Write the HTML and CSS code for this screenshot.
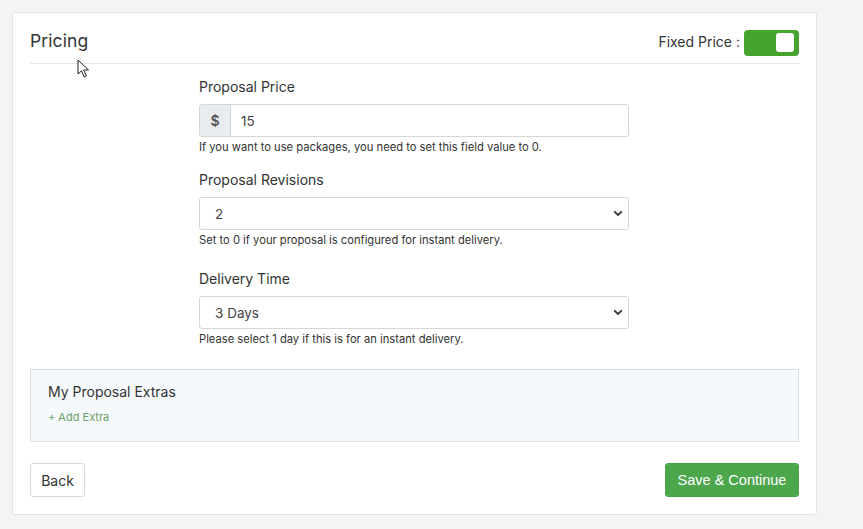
FILE: index.html
```html
<!DOCTYPE html>
<html>
<head>
<meta charset="utf-8">
<link rel="stylesheet" href="styles.css">
</head>
<body>
<div class="page">
  <div class="card">
    <div class="card-head">
      <h2 class="title">Pricing</h2>
      <div class="fixed">
        <span class="fixed-label">Fixed Price :</span>
        <span class="toggle"><span class="knob"></span></span>
      </div>
    </div>
    <div class="form">
      <div class="group g1">
        <label class="label">Proposal Price</label>
        <div class="input-group">
          <span class="addon">$</span>
          <input class="input" type="text" value="15">
        </div>
        <div class="help">If you want to use packages, you need to set this field value to 0.</div>
      </div>
      <div class="group g2">
        <label class="label">Proposal Revisions</label>
        <div class="select">
          <span>2</span>
          <svg class="chev" width="10" height="7" viewBox="0 0 10 7"><path d="M1.2 1.3 L5 5 L8.8 1.3" fill="none" stroke="#333" stroke-width="1.8"/></svg>
        </div>
        <div class="help">Set to 0 if your proposal is configured for instant delivery.</div>
      </div>
      <div class="group last">
        <label class="label">Delivery Time</label>
        <div class="select">
          <span>3 Days</span>
          <svg class="chev" width="10" height="7" viewBox="0 0 10 7"><path d="M1.2 1.3 L5 5 L8.8 1.3" fill="none" stroke="#333" stroke-width="1.8"/></svg>
        </div>
        <div class="help">Please select 1 day if this is for an instant delivery.</div>
      </div>
    </div>
    <div class="extras">
      <div class="extras-title">My Proposal Extras</div>
      <a class="add-extra">+ Add Extra</a>
    </div>
    <div class="actions">
      <button class="btn btn-back">Back</button>
      <button class="btn btn-save">Save &amp; Continue</button>
    </div>
  </div>
  <svg class="cursor" width="14" height="20" viewBox="0 0 14 20"><path d="M1 1 L1 15 L4.5 11.8 L7.2 18 L9.3 17 L6.7 11 L11.5 11 Z" fill="#fff" stroke="#222" stroke-width="1"/></svg>
</div>
</body>
</html>
```
FILE: styles.css
```css
* { box-sizing: border-box; }
html, body { margin: 0; padding: 0; }
body {
  background: #f4f4f4;
  font-family: Inter, "Open Sans", sans-serif;
  color: #333;
  width: 863px;
  height: 529px;
  overflow: hidden;
}
.page {
  position: relative;
  padding: 12px 0 0 12px;
}
.card {
  width: 805px;
  height: 503px;
  background: #fff;
  border: 1px solid #e2e2e2;
  border-radius: 3px;
  padding: 0 17px 0 17px;
}
.card-head {
  display: flex;
  justify-content: space-between;
  align-items: center;
  height: 51px;
  border-bottom: 1px solid #e6e6e6;
  padding-top: 17px;
}
.title {
  margin: 0;
  font-size: 17.5px;
  font-weight: 400;
  color: #333;
  letter-spacing: 0.1px;
  margin-top: -12px;
}
.fixed {
  display: flex;
  align-items: center;
  gap: 4px;
  margin-top: -8px;
}
.fixed-label {
  font-size: 14px;
  color: #333;
  margin-top: -2px;
}
.toggle {
  width: 55px;
  height: 26px;
  border-radius: 4px;
  background: #46a32e;
  display: flex;
  align-items: center;
  justify-content: flex-end;
  padding-right: 5px;
}
.knob {
  width: 18px;
  height: 19px;
  background: #fff;
  border-radius: 3px;
}
.form {
  width: 430px;
  margin-left: 169px;
  padding-top: 14px;
}
.group.g1 { margin-bottom: 17px; }
.group.g2 { margin-bottom: 23px; }
.label {
  display: block;
  font-size: 14px;
  color: #333;
  margin-bottom: 8px;
  line-height: 18px;
}
.input-group {
  display: flex;
  height: 33px;
  border: 1px solid #d6d6d6;
  border-radius: 3px;
  overflow: hidden;
}
.addon {
  width: 31px;
  background: #e9ecef;
  border-right: 1px solid #d6d6d6;
  display: flex;
  align-items: center;
  justify-content: center;
  font-size: 14px;
  font-weight: 600;
  color: #555;
}
.input {
  flex: 1;
  border: 0;
  outline: 0;
  padding: 0 10px;
  font-family: inherit;
  font-size: 13.5px;
  color: #444;
}
.select {
  display: flex;
  align-items: center;
  justify-content: space-between;
  height: 33px;
  border: 1px solid #d6d6d6;
  border-radius: 3px;
  padding: 0 4px 0 15px;
  font-size: 13.5px;
  color: #444;
}
.chev { margin-right: 1px; }
.help {
  font-size: 11.2px;
  color: #333;
  margin-top: 4px;
  line-height: 13px;
}
.extras {
  margin-top: 23px;
  height: 73px;
  background: #f6f9fc;
  border: 1px solid #dcdfe2;
  padding: 13px 17px 0 17px;
}
.extras-title {
  font-size: 14px;
  color: #333;
  line-height: 18px;
}
.add-extra {
  display: block;
  margin-top: 9px;
  font-size: 11px;
  color: #6aa06a;
}
.actions {
  display: flex;
  justify-content: space-between;
  margin-top: 21px;
}
.btn {
  height: 34px;
  border-radius: 3px;
  font-size: 14px;
  cursor: pointer;
}
.btn-back {
  width: 55px;
  background: #fff;
  border: 1px solid #d8d8d8;
  font-family: Inter, "Open Sans", sans-serif;
  color: #333;
}
.btn-save {
  width: 134px;
  background: #4ca64c;
  border: 1px solid #48a248;
  color: #fff;
  font-family: "Liberation Sans", Arial, sans-serif;
  font-size: 14.5px;
}
.cursor {
  position: absolute;
  left: 77px;
  top: 59px;
}
```
